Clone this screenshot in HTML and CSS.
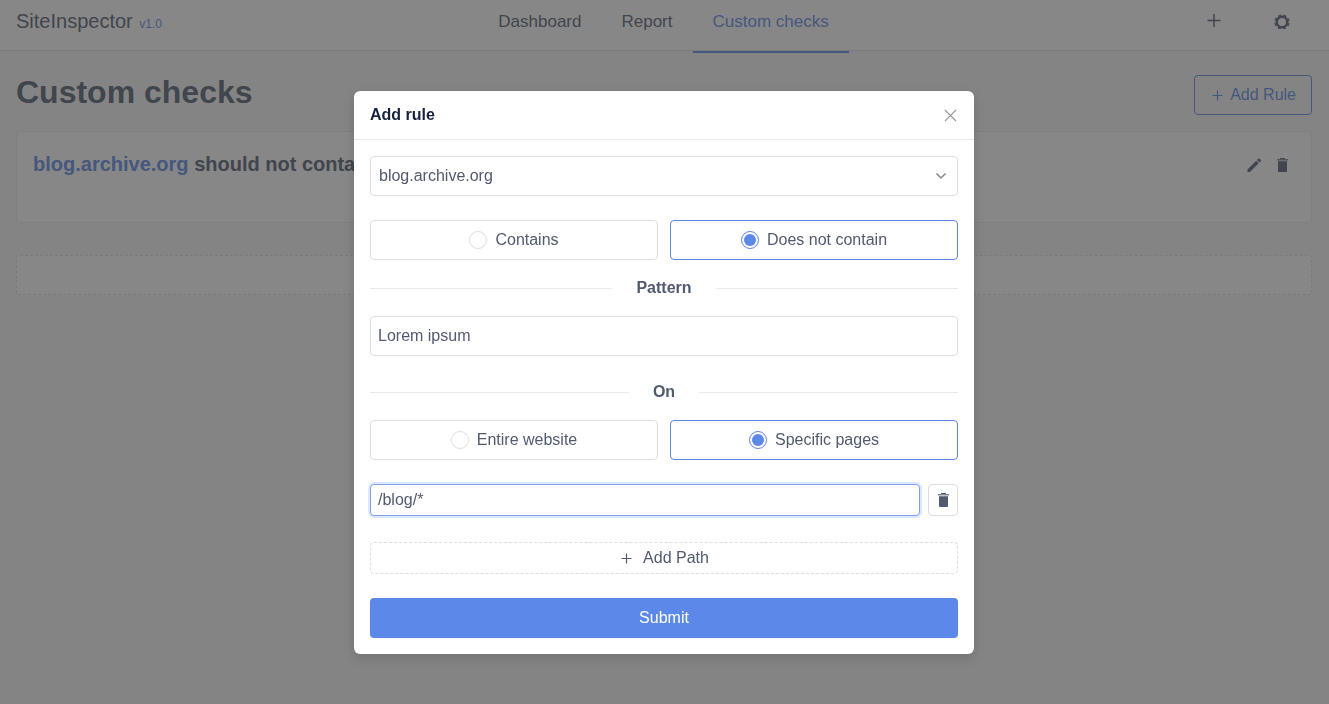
FILE: index.html
```html
<!DOCTYPE html>
<html lang="en">
<head>
<meta charset="utf-8">
<meta name="viewport" content="width=device-width, initial-scale=1.0">
<title>SiteInspector</title>
<link rel="stylesheet" href="styles.css">
</head>
<body>

<header class="header">
  <div class="brand">
    <a href="#" class="brand-name">SiteInspector</a>
    <span class="version">v1.0</span>
  </div>
  <nav class="menu">
    <a href="#">Dashboard</a>
    <a href="#">Report</a>
    <a href="#" class="active">Custom checks</a>
  </nav>
  <div class="tools">
    <button type="button" class="icon-btn" aria-label="Add">
      <svg class="icon" viewBox="0 0 16 16"><path d="M8 1v13M1.500 7.500h13" fill="none" stroke="currentColor" stroke-width="1.5"/></svg>
    </button>
    <button type="button" class="icon-btn" aria-label="Settings">
      <svg class="icon" viewBox="0 0 16 16"><circle cx="8" cy="9" r="5.200" fill="none" stroke="currentColor" stroke-width="2.4"/><circle cx="8" cy="9" r="6.800" fill="none" stroke="currentColor" stroke-width="1.6" stroke-dasharray="3 2.341" stroke-dashoffset="-1.2"/></svg>
    </button>
  </div>
</header>

<main class="page">
  <div class="page-head">
    <h1>Custom checks</h1>
    <button type="button" class="btn btn-outline">
      <svg class="icon" viewBox="0 0 16 16"><path d="M7.500 3.500v10M2.500 8.500h10" fill="none" stroke="currentColor" stroke-width="1.2"/></svg>
      Add Rule
    </button>
  </div>

  <section class="card">
    <h2><a href="#">blog.archive.org</a> should not contain Lorem ipsum</h2>
    <div class="card-tools">
      <button type="button" class="icon-btn" aria-label="Edit">
        <svg class="icon" viewBox="0 0 16 16"><path d="M1.500 15v-2.500l8.700-8.700 2.500 2.500L4 15zM11 3l1-1q.8-.8 1.500-.2l1.200 1.200q.6.7-.2 1.500l-1 1z" fill="currentColor"/></svg>
      </button>
      <button type="button" class="icon-btn" aria-label="Delete">
        <svg class="icon" viewBox="0 0 16 16"><path d="M6 1h5v1H6z" fill="currentColor"/><path d="M3 2h11v1.500H3z" fill="currentColor" opacity=".75"/><path d="M4 4.200h9V14q0 1-1 1H5q-1 0-1-1z" fill="currentColor"/></svg>
      </button>
    </div>
  </section>

  <button type="button" class="placeholder" aria-label="Add rule"></button>
</main>

<div class="mask">
  <form class="modal" role="dialog" aria-labelledby="modal-title">
    <div class="modal-head">
      <h3 id="modal-title">Add rule</h3>
      <button type="button" class="close" aria-label="Close">
        <svg viewBox="0 0 13 13"><path d="M1 1l11 11M12 1L1 12" fill="none" stroke="currentColor" stroke-width="1.1"/></svg>
      </button>
    </div>

    <div class="modal-body">
      <div class="select">
        <select name="site" aria-label="Site">
          <option>blog.archive.org</option>
        </select>
        <svg viewBox="0 0 12 12"><path d="M1.500 3.500L6 8l4.500-4.500" fill="none" stroke="currentColor" stroke-width="1.5"/></svg>
      </div>

      <div class="radios">
        <label class="radio"><input type="radio" name="type"> Contains</label>
        <label class="radio"><input type="radio" name="type" checked> Does not contain</label>
      </div>

      <label class="divider" for="pattern">Pattern</label>
      <input class="input" id="pattern" type="text" value="Lorem ipsum">

      <div class="divider divider-on">On</div>
      <div class="radios">
        <label class="radio"><input type="radio" name="scope"> Entire website</label>
        <label class="radio"><input type="radio" name="scope" checked> Specific pages</label>
      </div>

      <div class="path">
        <input class="input focused" type="text" value="/blog/*" aria-label="Path">
        <button type="button" class="btn-delete" aria-label="Delete path">
          <svg class="icon" viewBox="0 0 16 16"><path d="M6 1h5v1H6z" fill="currentColor"/><path d="M3 2h11v1.500H3z" fill="currentColor" opacity=".75"/><path d="M4 4.200h9V14q0 1-1 1H5q-1 0-1-1z" fill="currentColor"/></svg>
        </button>
      </div>

      <button type="button" class="btn-dashed">
        <svg class="icon" viewBox="0 0 16 16"><path d="M7.500 3.500v10M2.500 8.500h10" fill="none" stroke="currentColor" stroke-width="1.2"/></svg>
        Add Path
      </button>
      <button type="submit" class="btn-primary">Submit</button>
    </div>
  </form>
</div>

</body>
</html>
```
FILE: styles.css
```css
* {
  box-sizing: border-box;
}

body {
  margin: 0;
  background-color: #f8f8f9;
  color: #515a6e;
  font-family: "Liberation Sans", Arial, sans-serif;
  font-size: 16px;
  line-height: 24px;
}

h1, h2, h3 {
  margin: 0;
}

a {
  color: inherit;
  text-decoration: none;
}

button, input, select {
  font: inherit;
  color: inherit;
}

button {
  cursor: pointer;
}

.icon {
  width: 16px;
  height: 16px;
  flex: none;
}

/* Header */
.header {
  display: grid;
  grid-template-columns: 1fr auto 1fr;
  height: 51px;
  padding: 0 18px 0 16px;
  background-color: #ffffff;
  border-bottom: 1px solid #dcdee2;
}

.brand {
  padding-top: 9px;
}

.brand-name {
  font-size: 20px;
}

.version {
  margin-left: 2px;
  color: #5c88e9;
  font-size: 12px;
}

.menu {
  display: flex;
  font-size: 17px;
}

.menu a {
  height: 53px;
  padding: 10px 20px 0;
}

.menu a.active {
  color: #5c88e9;
  border-bottom: 2px solid #5c88e9;
}

.tools {
  display: flex;
  justify-content: flex-end;
  align-items: flex-start;
  gap: 52px;
  padding: 13px 21px 0;
}

.icon-btn {
  display: flex;
  padding: 0;
  background: none;
  border: none;
}

/* Page */
.page {
  padding: 24px 17px 24px 16px;
}

.page-head {
  display: flex;
  justify-content: space-between;
  margin-bottom: 16px;
}

h1 {
  font-size: 32px;
  line-height: 34px;
}

.btn {
  display: flex;
  align-items: center;
  gap: 4px;
  height: 40px;
  padding: 0 15px;
  border-radius: 4px;
}

.btn-outline {
  background: none;
  color: #5c88e9;
  border: 1px solid #5c88e9;
}

.card {
  display: flex;
  justify-content: space-between;
  height: 92px;
  margin-bottom: 32px;
  padding: 20px 21px 20px 16px;
  background-color: #ffffff;
  border: 1px solid #e8eaec;
  border-radius: 4px;
}

h2 {
  font-size: 20px;
  line-height: 24px;
}

h2 a {
  color: #5c88e9;
}

.card-tools {
  display: flex;
  align-items: flex-start;
  gap: 12px;
  padding-top: 5px;
}

.placeholder {
  display: block;
  width: 100%;
  height: 40px;
  background-color: #ffffff;
  border: 1px dashed #dcdee2;
  border-radius: 4px;
}

/* Modal */
.mask {
  position: fixed;
  inset: 0;
  padding: 91px 17px 16px 16px;
  background-color: rgba(55, 55, 55, 0.6);
  overflow: auto;
}

.modal {
  max-width: 620px;
  margin: 0 auto;
  background-color: #ffffff;
  border-radius: 6px;
  box-shadow: 0 4px 12px rgba(0, 0, 0, 0.15);
}

.modal-head {
  display: flex;
  justify-content: space-between;
  align-items: center;
  height: 49px;
  padding: 0 16px;
  border-bottom: 1px solid #e8eaec;
}

h3 {
  color: #17233d;
  font-size: 16px;
}

.close {
  display: flex;
  padding: 0;
  background: none;
  border: none;
  color: #999999;
}

.close svg {
  width: 15px;
  height: 13px;
}

.modal-body {
  padding: 16px;
}

.select {
  position: relative;
}

.select select {
  display: block;
  width: 100%;
  height: 40px;
  padding: 0 8px;
  background-color: #ffffff;
  border: 1px solid #dcdee2;
  border-radius: 4px;
  appearance: none;
}

.select svg {
  position: absolute;
  top: 14px;
  right: 11px;
  width: 12px;
  height: 12px;
  color: #808695;
  pointer-events: none;
}

.radios {
  display: grid;
  grid-template-columns: 1fr 1fr;
  gap: 12px;
}

.select + .radios {
  margin: 24px 0 16px;
}

.radio {
  display: flex;
  justify-content: center;
  align-items: center;
  gap: 8px;
  height: 40px;
  border: 1px solid #dcdee2;
  border-radius: 4px;
}

.radio:has(input:checked) {
  border-color: #5c88e9;
}

.radio input {
  appearance: none;
  width: 18px;
  height: 18px;
  margin: 0;
  border: 1px solid #dcdee2;
  border-radius: 50%;
}

.radio input:checked {
  padding: 2px;
  background-color: #5c88e9;
  background-clip: content-box;
  border-color: #5c88e9;
}

.divider {
  display: flex;
  align-items: center;
  gap: 24px;
  margin-bottom: 16px;
  font-weight: bold;
}

.divider::before,
.divider::after {
  content: "";
  flex: 1;
  border-top: 1px solid #e8eaec;
}

.divider-on {
  margin-top: 24px;
}

.input {
  display: block;
  width: 100%;
  height: 40px;
  padding: 0 7px;
  background-color: #ffffff;
  border: 1px solid #dcdee2;
  border-radius: 4px;
  outline: none;
}

.path {
  display: flex;
  gap: 8px;
  margin: 24px 0 26px;
}

.path .input {
  height: 32px;
}

.input.focused {
  border-color: #7da0ed;
  box-shadow: 0 0 0 2px rgba(92, 136, 233, 0.2);
}

.btn-delete {
  display: flex;
  justify-content: center;
  align-items: center;
  flex: none;
  width: 30px;
  height: 32px;
  padding: 0;
  background-color: #ffffff;
  border: 1px solid #dcdee2;
  border-radius: 4px;
}

.btn-dashed {
  display: flex;
  justify-content: center;
  align-items: center;
  gap: 8px;
  width: 100%;
  height: 32px;
  margin-bottom: 24px;
  background-color: #ffffff;
  border: 1px dashed #dcdee2;
  border-radius: 4px;
}

.btn-primary {
  display: block;
  width: 100%;
  height: 40px;
  background-color: #5c88e9;
  border: none;
  border-radius: 4px;
  color: #ffffff;
}
```
